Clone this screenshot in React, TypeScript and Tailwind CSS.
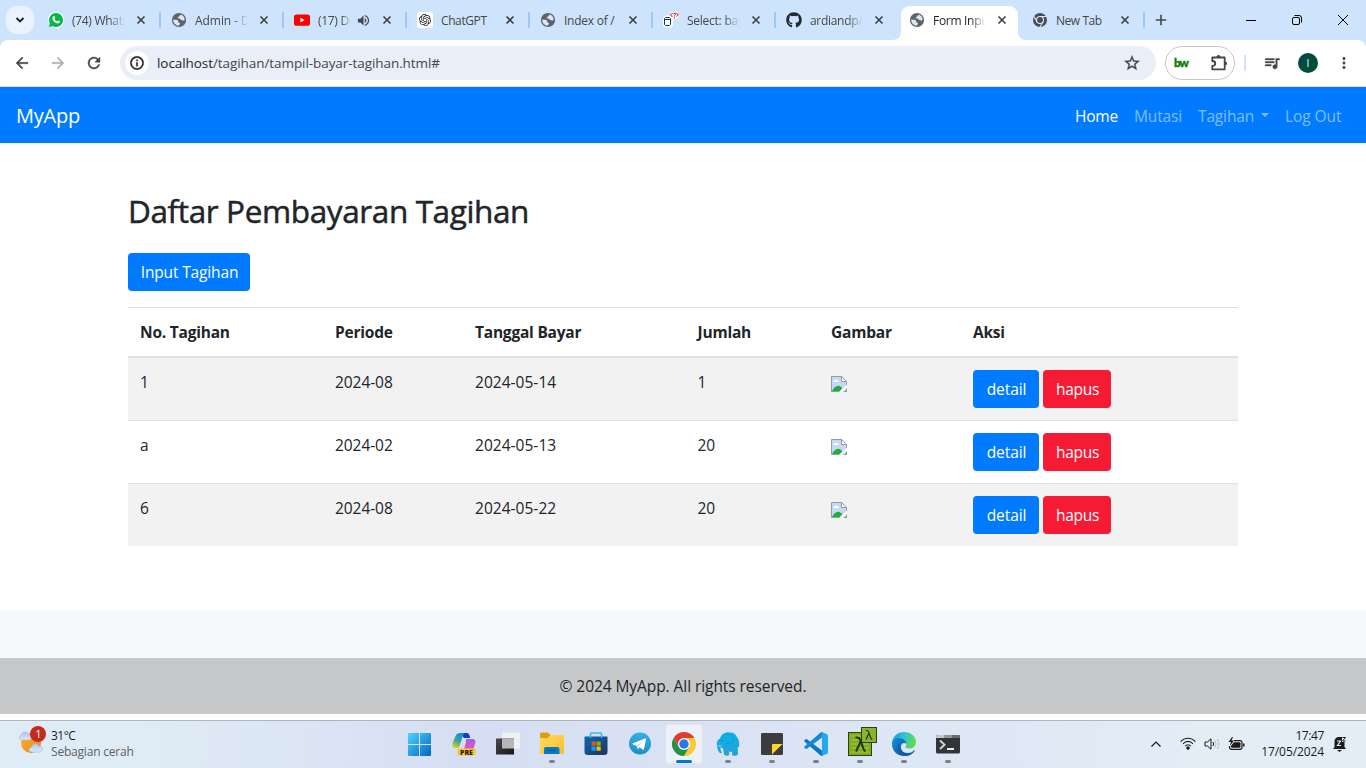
import React from "react";
import {
  MdRefresh,
  MdArrowBack,
  MdArrowForward,
  MdStarBorder,
  MdQueueMusic,
  MdMoreVert,
  MdInfoOutline,
  MdVolumeUp,
} from "react-icons/md";
import { FaGithub, FaWhatsapp } from "react-icons/fa";
import { SiOpenai } from "react-icons/si";

type Tab = {
  title: string;
  icon: React.ReactNode;
  active?: boolean;
  audio?: boolean;
  separator?: boolean;
  spacing: string;
};

const Globe = () => (
  <svg viewBox="0 0 16 16" className="size-4">
    <circle cx="8" cy="8" r="7.100" fill="#5f6368" />
    <path d="M9.800 2.400c-.3 1.100-1.800 1-1.900 2-.1.800-1.400.5-1.400 1.400 0 .8 1.200.5 2 .6 1 .1.800 1.500 1.900 1.600 1 .1 1.300.9 2.300.5.600-.2.800-.6 1-.9C13.500 5 12 3 9.800 2.400z" fill="#dbe7f6" />
    <path d="M2.200 7.600c1.800.2 4 .3 4.800 1 .7.700-.2 1.400.5 1.900.9.600 1.700.3 1.500 1.300-.2.900-1.100.9-1.200 2C4.600 13.700 2 11 2.200 7.600z" fill="#dbe7f6" />
  </svg>
);

const WhatsApp = () => (
  <span className="flex size-[14px] items-center justify-center rounded-full bg-[#00b944] ring-1 ring-white">
    <svg viewBox="0 0 14 14" className="size-[14px]">
      <path d="M0 14l1-4.500L4.500 13z" fill="#00b944" />
      <path
        d="M4.300 3.300c.5-.4 1-.4 1.300.2l.6 1.300c.2.500-.5 1-.6 1.300.5 1.100 1.500 1.900 2.600 2.300.4-.3.800-1 1.200-.8l1.400.7c.5.300.3 1-.2 1.500-1 1-2.600.8-4.200-.2C4.600 8.500 3.200 6.700 3.400 5c.1-.700.400-1.200.9-1.700z"
        fill="#fff"
      />
    </svg>
  </span>
);

const YouTube = () => (
  <svg viewBox="0 0 16 16" className="size-4">
    <rect x="0" y="2.400" width="16" height="11.400" rx="2.600" fill="#f00" />
    <path d="M6.400 5.700v4.800l4.200-2.400z" fill="#fff" />
  </svg>
);

const ChatGpt = () => (
  <span className="flex size-4 items-center justify-center rounded-[3px] bg-white">
    <SiOpenai className="size-[12px] text-[#222]" />
  </span>
);

const Adminer = () => (
  <svg viewBox="0 0 16 16" className="size-4 overflow-visible" fill="none">
    <path d="M1.500 6.500 3 5h4l1.500 1.500v6L7 14H3l-1.500-1.500z" fill="#fff" stroke="#fff" strokeWidth="3" />
    <path d="M7.500 3.500h7.500" stroke="#fff" strokeWidth="6" />
    <path d="M2.500 5.500h4l1 1v6l-1 1h-4l-1-1v-6zM1.500 7.500h6" stroke="#0b3b4a" />
    <path d="M9.500 1 7.500 3l2 2" stroke="#e00" />
    <path d="M10.500 1.500h2v1.200l-1 1v.8M11.500 5.300v1" stroke="#e00" />
    <path d="M13.500 1l1.500 1.700L13.500 4.500" stroke="#e00" />
  </svg>
);

const GrayChrome = () => (
  <svg viewBox="0 0 16 16" className="size-4">
    <circle cx="8" cy="8" r="7" fill="#4a4d51" />
    <circle cx="8" cy="8" r="3.500" fill="none" stroke="#dbe7f6" strokeWidth="1.100" />
    <path d="M8 4.500h6.300M4.970 9.750L1.800 4.300M11.030 9.750L7.900 15.200" stroke="#dbe7f6" strokeWidth="1.100" />
  </svg>
);

const tabs: Tab[] = [
  { title: "(74) WhatsApp", icon: <WhatsApp />, separator: true, spacing: "tracking-[-0.3px]" },
  { title: "Admin - Dashboard", icon: <Globe />, separator: true, spacing: "tracking-[-0.05px]" },
  { title: "(17) Dewa", icon: <YouTube />, audio: true, separator: true, spacing: "tracking-[-0.3px]" },
  { title: "ChatGPT", icon: <ChatGpt />, separator: true, spacing: "tracking-[-0.4px]" },
  { title: "Index of /", icon: <Globe />, separator: true, spacing: "tracking-[-0.25px]" },
  { title: "Select: bayar", icon: <Adminer />, separator: true, spacing: "tracking-[-0.25px]" },
  { title: "ardiandp/tagihan", icon: <FaGithub className="size-4 text-[#24292f]" />, spacing: "tracking-[-0.3px]" },
  { title: "Form Input", icon: <Globe />, active: true, spacing: "tracking-[-0.3px]" },
  { title: "New Tab", icon: <GrayChrome />, separator: true, spacing: "tracking-[-0.45px]" },
];

const fullTitles = ["ChatGPT", "New Tab", "Index of /"];

const Cross = () => (
  <svg viewBox="0 0 10 10" className="size-[10px] shrink-0 text-[#3c4043]">
    <path d="M1.500 1.500l7 7M8.500 1.500l-7 7" stroke="currentColor" strokeWidth="1.600" />
  </svg>
);

function BrowserTab({ tab }: { tab: Tab }) {
  return (
    <div className="relative h-10 w-[123px] shrink-0">
      {tab.active && (
        <svg viewBox="0 0 137 34" className="absolute -left-[7px] top-[6px] h-[34px] w-[137px]" fill="#fff">
          <path d="M0 34c6 0 9-3 9-9V9c0-5 4-9 9-9h99c5 0 9 4 9 9v16c0 6 3 9 9 9z" />
        </svg>
      )}
      <div className="relative flex h-10 items-center pl-[10px]">
        <span className="flex w-4 shrink-0 justify-center">{tab.icon}</span>
        <span
          className={`ml-2 mt-px overflow-hidden whitespace-nowrap text-xs ${tab.spacing} ${
            fullTitles.includes(tab.title) ? "" : "[mask-image:linear-gradient(to_right,black_70%,transparent)]"
          } ${tab.audio ? "w-[33px]" : "w-[53px]"} ${tab.active ? "text-[#1f1f1f]" : "text-[#474747]"}`}
        >
          {tab.title}
        </span>
        {tab.audio && <MdVolumeUp className="ml-[5px] size-[15px] shrink-0 text-[#474747]" />}
        <span className={tab.audio ? "ml-[11px]" : "ml-[11px]"}>
          <Cross />
        </span>
      </div>
      {tab.separator && <div className="absolute right-0 top-3 h-4 w-[2px] bg-[#a0c7fb]" />}
    </div>
  );
}

function TabStrip() {
  return (
    <div className="flex h-10 shrink-0 items-center bg-[#cee3fc]">
      <div className="ml-[6px] mr-1 flex size-7 shrink-0 items-center justify-center rounded-[10px] bg-[#eaf2ff]">
        <svg viewBox="0 0 10 10" className="size-[10px]" fill="none">
          <path d="M1.500 3l3.500 3.500L8.500 3" stroke="#1f1f1f" strokeWidth="1.800" />
        </svg>
      </div>
      {tabs.map((t) => (
        <BrowserTab key={t.title} tab={t} />
      ))}
      <svg viewBox="0 0 12 12" className="ml-[10px] size-3 shrink-0">
        <path d="M6 .8v10.400M.8 6h10.400" stroke="#474747" strokeWidth="1.600" />
      </svg>
      <div className="ml-auto flex items-center gap-9 pr-[18px] text-black">
        <svg viewBox="0 0 10 10" className="size-[10px]"><path d="M0 5.500h10" stroke="currentColor" /></svg>
        <svg viewBox="0 0 10 10" className="size-[10px]" fill="none" stroke="currentColor">
          <rect x=".5" y="2.500" width="7" height="7" rx="1.500" />
          <path d="M2.500.5H7A2.500 2.500 0 0 1 9.500 3v4.500" />
        </svg>
        <svg viewBox="0 0 10 10" className="size-[10px]"><path d="M0 0l10 10M10 0L0 10" stroke="currentColor" /></svg>
      </div>
    </div>
  );
}

const bold = "stroke-current [stroke-width:0.5px] [&>path[fill=none]]:hidden";

function Toolbar() {
  return (
    <div className="h-[47px] shrink-0 bg-[#cee3fc]">
      <div className="flex h-[47px] items-center rounded-t-lg border-b border-[#dedede] bg-white text-[#474747]">
        <MdArrowBack className={`ml-[13px] size-[18px] ${bold}`} />
        <MdArrowForward className={`ml-[18px] size-[18px] text-[#b0b0b0] ${bold}`} />
        <MdRefresh className={`ml-[18px] size-[18px] ${bold}`} />
        <div className="ml-[17px] flex h-[34px] w-[1036px] items-center rounded-full bg-[#e9eef8]">
          <span className="ml-[5px] flex size-6 items-center justify-center rounded-full bg-white text-[#1f1f1f]">
            <MdInfoOutline className={`size-4 ${bold}`} />
          </span>
          <span className="ml-2 whitespace-nowrap text-[13.500px] tracking-[-0.07px] text-[#474747]">
            <span className="text-[#1f1f1f]">localhost</span>/tagihan/tampil-bayar-tagihan.html#
          </span>
          <MdStarBorder className={`ml-auto mr-[15px] size-[18px] ${bold}`} />
        </div>
        <div className="ml-[9px] flex h-[34px] w-[70px] items-center rounded-full border border-[#c7c7c7]">
          <span className="ml-[8px] w-4 font-['Lato'] text-[11.500px] font-black leading-none tracking-[-0.9px] text-[#078007] [-webkit-text-stroke:0.4px_#078007]">bw</span>
          <svg viewBox="0 0 18 18" className="ml-[20px] size-[18px]" fill="none">
            <path
              d="M2.300 3.500h12.400v11.800H2.300v-3.500c1.700 0 2.900-1 2.900-2.400S4 7 2.300 7z"
              stroke="#474747"
              strokeWidth="1.800"
              strokeLinejoin="round"
            />
            <path d="M6.500 3a2 2 0 0 1 4 0zM15 7.500a2 2 0 0 1 0 4z" fill="#474747" />
          </svg>
        </div>
        <div className="ml-[9px] h-4 w-[2px] bg-[#cfe3fc]" />
        <MdQueueMusic className={`ml-[17px] size-[18px] ${bold}`} />
        <div className="ml-[17px] flex size-5 items-center justify-center rounded-full bg-[#004d40] text-[10px] text-white">I</div>
        <MdMoreVert className="ml-[17px] size-[18px]" />
      </div>
    </div>
  );
}

function BrokenImage() {
  return (
    <svg viewBox="0 0 16 16" className="mt-[6px] size-4">
      <path d="M.5.5h10.200l4.800 4.800v10.200H.5z" fill="#c3d9f7" />
      <path d="M2 6c0-1 .8-1.500 1.500-1.500C4 3 6 3 6.500 4.500 7.500 4.500 8 5.200 8 6z" fill="#fff" />
      <path d="M1 15c2-4 6-7 9-4l1.500 1L9 15z" fill="#20ac43" />
      <path d="M10.500.5v5h5z" fill="#fff" />
      <path d="M15.500 15.500H.5V.5h10.200l4.800 4.800zM10.500.5v5h5" fill="none" stroke="#9b9b9b" />
      <path d="M8 16l8-7.500V12l-4 4z" fill="#fff" />
      <path d="M16 13v3h-3z" fill="#6fae83" />
    </svg>
  );
}

const button = "flex h-[38px] items-center justify-center rounded pl-px text-white";
const columns = "grid grid-cols-[195px_140px_222.5px_133.5px_142px_277px] *:pl-3 pt-3";

const rows = [
  { no: "1", period: "2024-08", paid: "2024-05-14", total: "1" },
  { no: "a", period: "2024-02", paid: "2024-05-13", total: "20" },
  { no: "6", period: "2024-08", paid: "2024-05-22", total: "20" },
];

function Page() {
  return (
    <div className="flex flex-1 flex-col bg-white text-[15.500px] leading-6 tracking-[-0.07px] text-[#212529]">
      <nav className="flex h-14 shrink-0 items-center bg-[#007bff] pl-4 pr-6 pt-[2px] text-white">
        <span className="text-[20px] tracking-[-0.2px]">MyApp</span>
        <div className="ml-auto flex gap-4 text-white/50">
          <span className="w-[43px] whitespace-nowrap tracking-[-0.2px] text-white">Home</span>
          <span className="w-[48px] whitespace-nowrap tracking-[-0.15px]">Mutasi</span>
          <span className="flex w-[71px] items-center justify-between whitespace-nowrap tracking-[-0.15px]">
            Tagihan
            <span className="-mt-[2px] border-x-[4.500px] border-t-[4.500px] border-x-transparent border-t-current" />
          </span>
          <span className="w-[57px] whitespace-nowrap">Log Out</span>
        </div>
      </nav>
      <main className="h-[467px] shrink-0 px-32 pt-12">
        <h2 className="h-[62px] text-[31.500px] leading-[40px] tracking-[-0.38px] [-webkit-text-stroke:0.5px_#212529]">Daftar Pembayaran Tagihan</h2>
        <div className={`${button} w-[122px] bg-[#007bff] tracking-[-0.15px]`}>Input Tagihan</div>
        <div className="mt-4">
          <div className={`${columns} h-[51px] border-b-2 border-t border-b-[#dee2e6] border-t-[#dee2e6] font-bold tracking-[-0.22px]`}>
            <span>No. Tagihan</span>
            <span>Periode</span>
            <span>Tanggal Bayar</span>
            <span>Jumlah</span>
            <span>Gambar</span>
            <span>Aksi</span>
          </div>
          {rows.map((r, i) => (
            <div
              key={r.paid}
              className={`${columns} ${i === 0 ? "h-[62px]" : "h-[63px] border-t border-[#dee2e6]"} ${i % 2 === 0 ? "bg-[#f2f2f2]" : "bg-white"}`}
            >
              <span>{r.no}</span>
              <span>{r.period}</span>
              <span className="tracking-[0.03px]">{r.paid}</span>
              <span>{r.total}</span>
              <span><BrokenImage /></span>
              <div className="flex gap-1">
                <div className={`${button} w-[66px] bg-[#007bff]`}>detail</div>
                <div className={`${button} w-[68px] bg-[#f51b35] tracking-[-0.25px]`}>hapus</div>
              </div>
            </div>
          ))}
        </div>
      </main>
      <div className="h-12 shrink-0 bg-[#f8f9fa]" />
      <footer className="flex h-14 shrink-0 items-center justify-center bg-[#c6c7c8]">© 2024 MyApp. All rights reserved.</footer>
    </div>
  );
}

const StartIcon = () => (
  <svg viewBox="0.5 0.5 23 23" className="mr-px size-[23px]">
    <defs>
      <linearGradient id="start" x1="0" y1="0" x2="1" y2="1">
        <stop stopColor="#4fd3fb" />
        <stop offset="1" stopColor="#0067c7" />
      </linearGradient>
    </defs>
    <path d="M.5 1.500q0-1 1-1h10v11H.5zM12.500.5h10q1 0 1 1v10h-11zM.5 12.500h11v11h-10q-1 0-1-1zM12.500 12.500h11v10q0 1-1 1h-10z" fill="url(#start)" />
  </svg>
);

const CopilotIcon = () => (
  <svg viewBox="0 0 24 24" className="size-6">
    <defs>
      <linearGradient id="cop1" x1="0.600" y1="0" x2="0.200" y2="1">
        <stop stopColor="#1687dd" />
        <stop offset=".5" stopColor="#36a89a" />
        <stop offset="1" stopColor="#e8ca20" />
      </linearGradient>
      <linearGradient id="cop2" x1="0.700" y1="0" x2="0.300" y2="1">
        <stop stopColor="#9a62ee" />
        <stop offset=".5" stopColor="#dc57bd" />
        <stop offset="1" stopColor="#ff8461" />
      </linearGradient>
    </defs>
    <path d="M8 1h7c2 0 2.500 2 3.200 5H12z" fill="#0b45c5" />
    <path d="M8 1h6c-2 0-3 2-3.500 4L8 13c-.6 2-1.500 3-3 3H3c-3 0-3-3-2-6L3.500 4C4.500 2 6 1 8 1z" fill="url(#cop1)" />
    <path d="M14 7h6c3 0 4 2 3 5l-2 6c-1 3-3 4-5 4H8c3 0 3-2 4-5l2-7z" fill="url(#cop2)" />
    <rect x="5.500" y="16.500" width="18" height="7" rx="1.500" fill="#ffc51c" />
    <text x="14.500" y="22.500" textAnchor="middle" fontFamily="Open Sans, sans-serif" fontSize="6.900" fontWeight="800" fill="#1d1b12">PRE</text>
  </svg>
);

const TaskViewIcon = () => (
  <svg viewBox="0 0 24 24" className="size-6">
    <defs>
      <linearGradient id="tv" x1="0" y1="0" x2="1" y2="1">
        <stop stopColor="#4a4a4a" />
        <stop offset="1" stopColor="#171717" />
      </linearGradient>
    </defs>
    <rect x="6" y=".5" width="18" height="16" rx="1" fill="#f0f1f2" />
    <path d="M0 7q0-.5.5-.5H18v16H.5q-.5 0-.5-.5z" fill="url(#tv)" />
    <path d="M6 6.500h12v10H6z" fill="#b6b7b9" />
  </svg>
);

const FolderIcon = () => (
  <svg viewBox="0 0 24 24" className="size-6">
    <defs>
      <linearGradient id="folder" x1="0" y1="0" x2="1" y2="1">
        <stop stopColor="#ffdc68" />
        <stop offset="1" stopColor="#ffbd24" />
      </linearGradient>
    </defs>
    <path d="M0 2q0-1.500 1.500-1.500h5.500q1 0 1.600.7L10.500 3H22v7H0z" fill="#dfa006" />
    <path d="M0 7q0-1 1-1h7l2.500-3H23q1 0 1 1v16.500q0 1.500-1.500 1.500h-21Q0 22 0 20.500z" fill="url(#folder)" />
    <path d="M4 22v-5q0-2 2-2h11.500q2 0 2 2v5z" fill="#0878c9" />
    <path d="M7.500 18.500h8.500" stroke="#075c9c" strokeWidth="1.400" />
  </svg>
);

const StoreIcon = () => (
  <svg viewBox="0 0 24 24" className="size-6">
    <defs>
      <linearGradient id="store" x1="0" y1="0" x2="1" y2="1">
        <stop stopColor="#0968b3" />
        <stop offset="1" stopColor="#24345d" />
      </linearGradient>
    </defs>
    <path d="M6.500 6V2q0-1 1-1h9q1 0 1 1v4" fill="none" stroke="#27bdf2" strokeWidth="1.500" />
    <path d="M.5 5q0-.5.5-.5h22q.5 0 .5.500v15q0 3-3 3h-17q-3 0-3-3z" fill="url(#store)" />
    <path d="M6.500 3.500V6M17.500 3.500V6" stroke="#27bdf2" strokeWidth="1.500" />
    <path d="M7.500 9.500h4.200v4.200H7.500z" fill="#f25022" />
    <path d="M12.500 9.500h4.200v4.200h-4.200z" fill="#7fba00" />
    <path d="M7.500 14.500h4.200v4.200H7.500z" fill="#00a4ef" />
    <path d="M12.500 14.500h4.200v4.200h-4.200z" fill="#ffb900" />
  </svg>
);

const TelegramIcon = () => (
  <svg viewBox="0 0 24 24" className="size-6">
    <defs>
      <linearGradient id="tg" x1="0" y1="0" x2="0" y2="1">
        <stop stopColor="#36afe1" />
        <stop offset="1" stopColor="#1b8fca" />
      </linearGradient>
    </defs>
    <circle cx="12" cy="11.500" r="11" fill="url(#tg)" />
    <path d="M5 11.300l12-4.700c.8-.3 1.200.2 1 1l-2 9.400c-.2.800-.8 1-1.400.5L11.500 15.200 10 16.700c-.3.300-.7.200-.8-.3l-.7-2.700-3.300-1c-.8-.3-.9-1-.2-1.400z" fill="#fff" />
    <path d="M8.500 13.700l7-5-5 5-.5 3z" fill="#b9d8ec" />
  </svg>
);

const ChromeIcon = () => (
  <svg viewBox="0 0 48 48" className="size-6">
    <path d="M24 12h20.800A24 24 0 0 1 24 48l10.400-18z" fill="#fcc934" />
    <path d="M13.600 30L3.200 12A24 24 0 0 0 24 48l10.400-18z" fill="#229342" />
    <path d="M3.200 12A24 24 0 0 1 44.800 12H24L13.600 30z" fill="#e33b2e" />
    <circle cx="24" cy="24" r="12" fill="#fff" />
    <circle cx="24" cy="24" r="9.500" fill="#2978ea" />
  </svg>
);

const ElephantIcon = () => (
  <svg viewBox="0 0 24 24" className="size-6">
    <defs>
      <linearGradient id="elephant" x1="0" y1="0" x2="0" y2="1">
        <stop stopColor="#06b4ee" />
        <stop offset="1" stopColor="#2a9fd0" />
      </linearGradient>
    </defs>
    <path
      d="M4 6.500C5.500 2 9.500-.2 13.500.4c4-.2 6.500 1.700 7.200 4.400 2.300 2 2.700 6 2.400 9.700l-.7 1-.5-1c-.5 3 .7 6-.3 8.200-1 1.300-4.500 1.300-5.500.3v-3.500c-1.200.5-2 .5-3 0V23c-1.500 1-4.500 1-5-.5l-1-6c-.8-.3-1.300-.8-1.800-1.500-1 1-1.200 2.500-.2 4l.8 1.500-1.700.8C2 19.500 1 17 1.400 14 .200 11.500.800 8 4 6.500z"
      fill="url(#elephant)"
    />
    <path d="M9 2.500c3-1 8 0 8.500 4 .4 4-3 6-7 4.500" fill="none" stroke="#1191cf" strokeWidth=".6" />
    <path d="M2.700 13.300c.8 1 1.800 1 2.600 0" fill="none" stroke="#d8f1fb" strokeWidth=".9" />
    <circle cx="6" cy="8.500" r=".6" fill="#075a87" />
  </svg>
);

const StickyIcon = () => (
  <svg viewBox="0 0 24 24" className="size-6">
    <path d="M2.300 1h19.400q1.300 0 1.300 1.300V12L12 23H2.300Q1 23 1 21.700V2.300Q1 1 2.300 1z" fill="#3d3d3e" />
    <path d="M12 22V12h10v10z" fill="#3d3d3e" />
    <path d="M12 22.500V13q0-1 1-1h9.500z" fill="#ffd52b" />
    <path d="M12 23L23 12v9.700q0 1.300-1.300 1.300z" fill="#3d3d3e" />
  </svg>
);

const CodeIcon = () => (
  <svg viewBox="0 0 24 24" className="size-6">
    <path d="M18 0L23 2.200q1 .5 1 1.600v16.400q0 1.100-1 1.600L18 24z" fill="#26a7f0" />
    <path d="M.4 8.600l1.300-1.300q.6-.4 1.200 0L18 18.500V24q-1 0-1.700-.7L.4 9.600q-.5-.5 0-1z" fill="#0879c3" />
    <path d="M.4 15.400l1.300 1.300q.6.4 1.200 0L18 5.500V0q-1 0-1.700.7L.4 14.400q-.5.500 0 1z" fill="#128bd3" />
  </svg>
);

const LambdaIcon = () => (
  <svg viewBox="0 0 29 29" className="-mt-[5px] ml-[5px] size-[29px] shrink-0">
    <g stroke="#333b18">
      <rect x=".5" y="5.500" width="23" height="23" fill="#80ad1c" />
      <path d="M3 9h9M3 13h18M3 17h18M3 21h18M3 25h18" stroke="#a5cb4b" strokeWidth="1" />
      <rect x="13.500" y=".5" width="15" height="15" fill="#8ab52b" />
    </g>
    <path d="M7.500 10.500h2c1.500 0 2 .5 2.700 2.300L16 23c.4 1 .8 1 1.500.6M12.700 14.500L8 24.500" fill="none" stroke="#25331a" strokeWidth="2" />
    <path d="M18 3.500h1c1 0 1.300.5 1.700 1.600L23 11.500c.3.800.7.800 1.300.5M21 6l-3 6.500" fill="none" stroke="#25331a" strokeWidth="1.200" />
  </svg>
);

const EdgeIcon = () => (
  <svg viewBox="0 0 24 24" className="size-6">
    <defs>
      <linearGradient id="edgeTop" x1="0" y1=".3" x2="1" y2=".5">
        <stop stopColor="#169ae0" />
        <stop offset=".45" stopColor="#2fc2d5" />
        <stop offset="1" stopColor="#61dd4b" />
      </linearGradient>
      <linearGradient id="edgeLow" x1="0" y1="0" x2="1" y2="1">
        <stop stopColor="#1390dd" />
        <stop offset="1" stopColor="#104a96" />
      </linearGradient>
    </defs>
    <path d="M0 11C.5 4.500 5.500 0 12 0c7 0 12 4.500 12 10 0 4-3 6.500-6.500 6.500-3 0-4.500-1-4-2 2-2.500.8-6.500-3-7.500C6 6 2 7.500 0 11z" fill="url(#edgeTop)" />
    <path d="M0 12c0-3.500 3-6 7-6 4.500 0 7.500 3 7.500 6-2-2-5-1-5.500 2-.7 4 3 8 8 8-1.500 1.300-3 2-5 2C5 24 0 18.500 0 12z" fill="url(#edgeLow)" />
    <path d="M8 9.500c-3 3-1 11.500 8 11.500 3 0 5-1.500 6-2.500.600-.5 1 0 .7.500C20.500 22.500 17 24 14 24 7 24 3.500 13 8 9.500z" fill="#145ba8" />
  </svg>
);

const TerminalIcon = () => (
  <svg viewBox="0 0 24 24" className="size-6">
    <rect x="0" y="3" width="24" height="18.500" rx="1.500" fill="#333436" />
    <path d="M0 6V4.500Q0 3 1.500 3H8v3z" fill="#c7c7c9" />
    <path d="M8 3h8v3H8z" fill="#929496" />
    <path d="M16 3h6.500Q24 3 24 4.500V6h-8z" fill="#6a6c6f" />
    <path d="M4 8.500l4.500 4.300L4 17" fill="none" stroke="#d2d2d3" strokeWidth="2" />
    <path d="M11 17h7" stroke="#fff" strokeWidth="1.800" />
  </svg>
);

const apps = [
  { name: "start", icon: <StartIcon />, open: false },
  { name: "copilot", icon: <CopilotIcon />, open: false },
  { name: "task-view", icon: <TaskViewIcon />, open: false },
  { name: "files", icon: <FolderIcon />, open: true },
  { name: "store", icon: <StoreIcon />, open: false },
  { name: "telegram", icon: <TelegramIcon />, open: false },
  { name: "chrome", icon: <ChromeIcon />, open: true },
  { name: "elephant", icon: <ElephantIcon />, open: true },
  { name: "notes", icon: <StickyIcon />, open: true },
  { name: "code", icon: <CodeIcon />, open: true },
  { name: "lambda", icon: <LambdaIcon />, open: true },
  { name: "edge", icon: <EdgeIcon />, open: true },
  { name: "terminal", icon: <TerminalIcon />, open: true },
];

function Weather() {
  return (
    <div className="flex w-[398px] shrink-0 items-center pb-[2px] pl-[18px]">
      <svg viewBox="0 0 28 28" className="-mt-2 size-7">
        <defs>
          <linearGradient id="sun" x1="0" y1="0" x2="1" y2="1">
            <stop stopColor="#fbb52a" />
            <stop offset="1" stopColor="#f08212" />
          </linearGradient>
          <linearGradient id="cloud" x1="0" y1="0" x2="0" y2="1">
            <stop stopColor="#a8c4f3" />
            <stop offset="1" stopColor="#dfe9fa" />
          </linearGradient>
        </defs>
        <circle cx="13" cy="17" r="10" fill="url(#sun)" />
        <path d="M4 14c-3 0-4-4-.5-5C4 5 10 5 11 9c3 0 3 5 0 5z" fill="url(#cloud)" stroke="#91b0e6" strokeWidth=".5" />
        <path d="M14 26c-4 0-4-4.500-.5-5 .5-4 7-4.500 8-.5 4 0 4 5.500 0 5.500z" fill="url(#cloud)" stroke="#91b0e6" strokeWidth=".5" />
        <circle cx="20" cy="8" r="8" fill="#c42b1c" />
        <text x="20.300" y="12" textAnchor="middle" fontFamily="Open Sans, sans-serif" fontSize="11" fill="#fff">1</text>
      </svg>
      <div className="ml-[5px] text-xs leading-4">
        <div className="tracking-[-0.5px] text-[#1b1b1b]">31°C</div>
        <div className="tracking-[-0.2px] text-[#5d6063]">Sebagian cerah</div>
      </div>
    </div>
  );
}

function Tray() {
  return (
    <div className="ml-auto flex items-center pb-[2px] pr-[19px] text-[#1b1b1b]">
      <svg viewBox="0 0 12 8" className="mr-[18px] h-2 w-3" fill="none">
        <path d="M1.500 6.500L6 2l4.500 4.500" stroke="currentColor" strokeWidth="1.200" />
      </svg>
      <svg viewBox="0 0 16 13" className="h-[13px] w-4" fill="none" stroke="currentColor" strokeWidth="1.100">
        <path d="M.7 4.700c4-4.700 10.600-4.700 14.600 0M2.900 7c3-3.500 7.200-3.500 10.200 0M5.200 9.200c1.700-2 3.900-2 5.600 0" />
        <circle cx="8" cy="11" r="1.200" fill="currentColor" />
      </svg>
      <svg viewBox="0 0 17 14" className="ml-2 h-[14px] w-[17px]" fill="none" stroke="currentColor">
        <path d="M1 5h2.500L7 1.800v10.400L3.500 9H1z" />
        <path d="M9 5q1.200 2 0 4" />
        <path d="M11 3.500q2.300 3.500 0 7M13.500 2q3 5 0 10" stroke="#b4bfc9" />
      </svg>
      <svg viewBox="0 0 17 14" className="ml-[7px] h-[14px] w-[17px]">
        <rect x="1.500" y="3.700" width="12.500" height="8.600" rx="2" fill="none" stroke="currentColor" strokeWidth="1.200" />
        <rect x="3" y="5.200" width="9.500" height="5.600" rx="1" fill="currentColor" />
        <path d="M15 6.500h1.500v3H15z" fill="currentColor" />
        <path d="M0 0h6v5L3 9H0z" fill="#e0ebf6" />
        <path d="M4 0L.5 5H3l-1 4 4-5.500H3.500L5 0z" fill="currentColor" />
      </svg>
      <div className="ml-4 w-[63px] whitespace-nowrap text-right text-xs leading-4">
        <div className="tracking-[-0.4px]">17:47</div>
        <div className="-ml-1 tracking-[-0.1px]">17/05/2024</div>
      </div>
      <svg viewBox="0 0 15 16" className="ml-2 h-4 w-[15px]">
        <path d="M2.500 11V6C2.500 2.500 4.500 1 7 1h3v5h2.500v5l1.500 2H1z" fill="currentColor" />
        <path d="M5 14h5L7.500 16z" fill="currentColor" />
        <path d="M5 5h3.500L5.500 9.500H9" stroke="#e2edf6" fill="none" strokeWidth="1.200" />
        <path d="M10.500 1.500h3l-3 3.500h3" stroke="currentColor" fill="none" />
      </svg>
    </div>
  );
}

function Taskbar() {
  return (
    <div className="flex h-12 shrink-0 items-stretch border-t border-[#aeb5bf] bg-linear-to-r from-[#e0ecf5] from-10% via-[#d6def3] via-35% to-[#e2edf6] to-88%">
      <Weather />
      {apps.map((a) => (
        <div key={a.name} className="flex w-11 shrink-0 justify-center pt-[3px]">
          <div
            className={`relative flex h-[40px] w-[38px] items-center justify-center rounded ${
              a.name === "chrome" ? "bg-[#edf1fa] ring-1 ring-inset ring-[#dfe4f3]" : ""
            }`}
          >
            {a.icon}
            {a.open && (
              <span
                className={`absolute bottom-px h-[3px] rounded-full ${a.name === "chrome" ? "w-4 bg-[#0078d4]" : "w-[6px] bg-[#7d818c]"}`}
              />
            )}
          </div>
        </div>
      ))}
      <Tray />
    </div>
  );
}

export default function App() {
  return (
    <div className="flex h-screen w-screen flex-col overflow-hidden bg-white font-['Open_Sans','Noto_Sans',sans-serif]">
      <TabStrip />
      <Toolbar />
      <Page />
      <Taskbar />
    </div>
  );
}
